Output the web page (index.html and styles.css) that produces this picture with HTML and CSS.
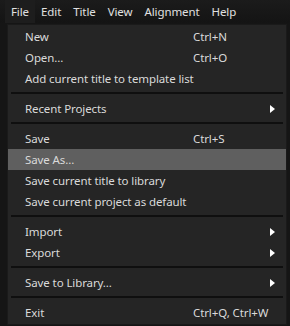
FILE: index.html
```html
<!DOCTYPE html>
<html lang="en">
<head>
    <meta charset="UTF-8">
    <title>File menu</title>
    <link rel="stylesheet" href="styles.css">
</head>
<body>
    <nav class="menubar">
        <span class="menubar-item active">File</span>
        <span class="menubar-item">Edit</span>
        <span class="menubar-item">Title</span>
        <span class="menubar-item">View</span>
        <span class="menubar-item">Alignment</span>
        <span class="menubar-item">Help</span>
    </nav>

    <div class="menu">
        <div class="menu-item"><span class="label">New</span><span class="shortcut">Ctrl+N</span></div>
        <div class="menu-item"><span class="label">Open...</span><span class="shortcut">Ctrl+O</span></div>
        <div class="menu-item"><span class="label">Add current title to template list</span></div>
        <div class="separator"></div>
        <div class="menu-item"><span class="label">Recent Projects</span><span class="arrow"></span></div>
        <div class="separator"></div>
        <div class="menu-item"><span class="label">Save</span><span class="shortcut">Ctrl+S</span></div>
        <div class="menu-item hover"><span class="label">Save As...</span></div>
        <div class="menu-item"><span class="label">Save current title to library</span></div>
        <div class="menu-item"><span class="label">Save current project as default</span></div>
        <div class="separator"></div>
        <div class="menu-item"><span class="label">Import</span><span class="arrow"></span></div>
        <div class="menu-item"><span class="label">Export</span><span class="arrow"></span></div>
        <div class="separator"></div>
        <div class="menu-item"><span class="label">Save to Library...</span><span class="arrow"></span></div>
        <div class="separator"></div>
        <div class="menu-item"><span class="label">Exit</span><span class="shortcut">Ctrl+Q, Ctrl+W</span></div>
    </div>
</body>
</html>
```

FILE: styles.css
```css
body {
    margin: 0;
    padding: 0;
    background: #151515;
    font-family: "Noto Sans", "Open Sans", sans-serif;
    font-size: 11.5px;
    letter-spacing: -0.1px;
    color: #dadada;
    width: 290px;
    height: 326px;
    overflow: hidden;
}

.menubar {
    height: 23px;
    display: flex;
    align-items: center;
    background: linear-gradient(#1b1b1b, #141414);
    padding-left: 5px;
}

.menubar-item {
    padding: 0 6px;
    line-height: 23px;
    color: #e0e0e0;
}

.menubar-item.active {
    background: #1d1d1d;
}

.menu {
    margin: 1px 0 0 7px;
    width: 278px;
    background: #252525;
    border: 1px solid #1a1a1a;
    padding: 1px 0;
}

.menu-item {
    height: 21px;
    display: flex;
    align-items: center;
    padding: 0 11px 0 17px;
}

.menu-item.hover {
    background: #5f5f5f;
}

.menu-item .label {
    flex: 1;
}

.menu-item .shortcut {
    width: 82px;
}

.arrow {
    width: 0;
    height: 0;
    border-top: 4px solid transparent;
    border-bottom: 4px solid transparent;
    border-left: 5px solid #ffffff;
}

.separator {
    height: 2px;
    background: #0f0f0f;
    margin: 3px 3px 4px 3px;
}
```
